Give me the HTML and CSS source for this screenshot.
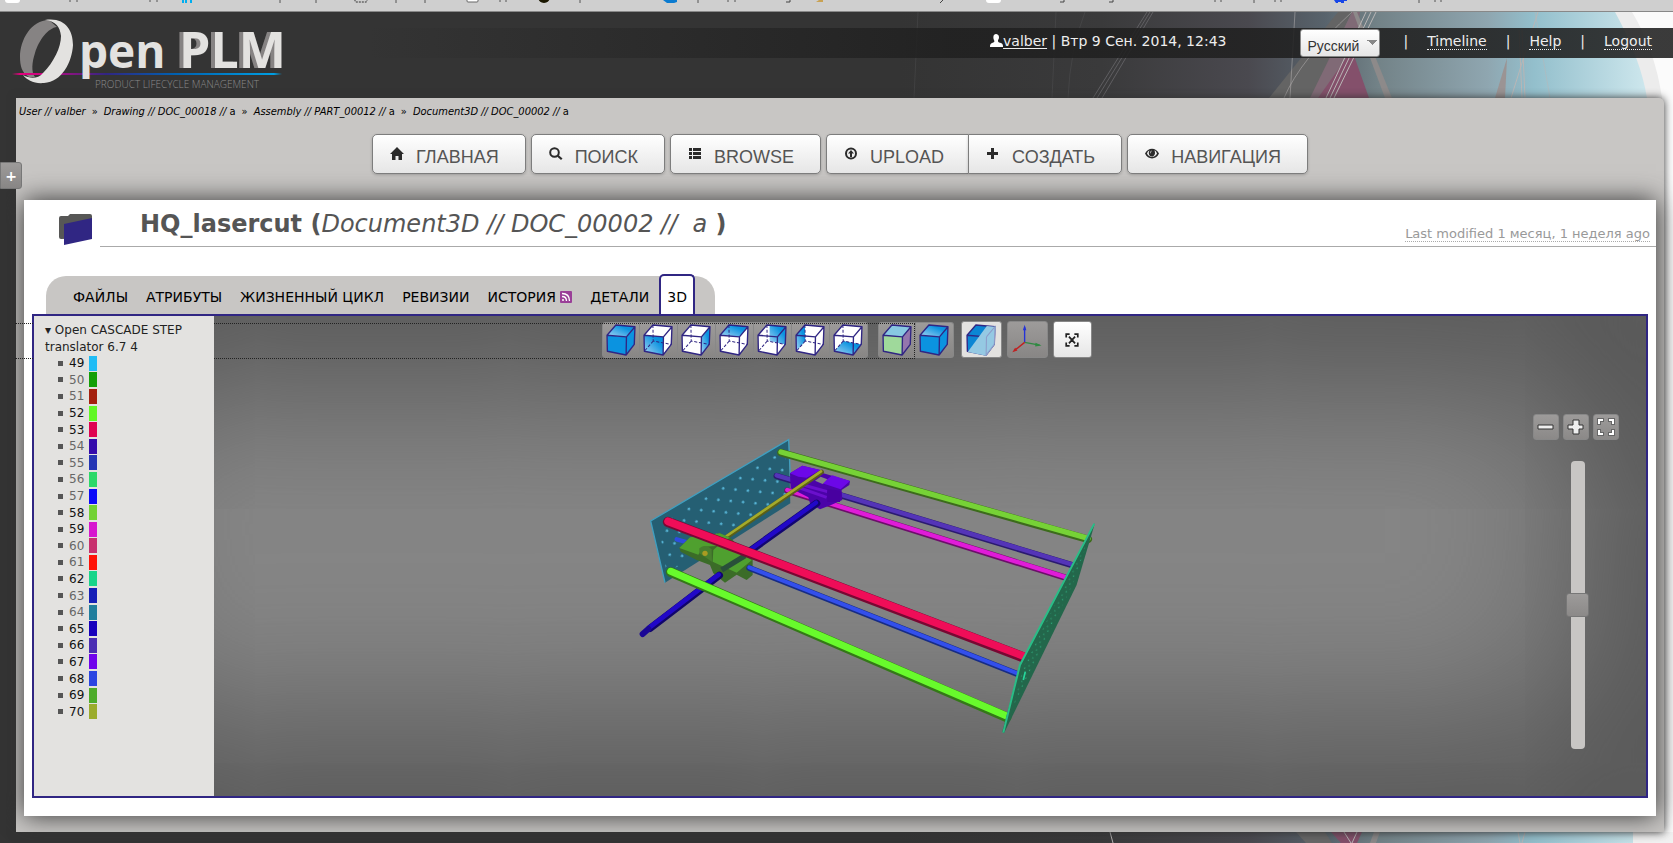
FILE: index.html
```html
<!DOCTYPE html>
<html lang="ru">
<head>
  <meta charset="UTF-8" />
  <meta name="viewport" content="width=device-width, initial-scale=1.0"/>
  <title>HQ_lasercut - OpenPLM</title>
  <link rel="stylesheet" href="styles.css">
</head>
<body>

  <!-- shared cube outlines -->
  <svg class="defs" width="0" height="0" aria-hidden="true">
    <defs>
      <linearGradient id="blueTop" x1="1" y1="0" x2="0" y2="1">
        <stop offset="0.3" stop-color="#0b93e0"/><stop offset="1" stop-color="#a9d6f3"/>
      </linearGradient>
      <g id="edges" fill="none" stroke="#302683" stroke-width="4" stroke-linejoin="round">
        <path d="M2 33 L59 38 L58 91 L3 80 Z M2 33 L28 3 L84 8 L59 38 M84 8 L82 60 L58 91"/>
      </g>
      <path id="hidden" d="M28 3 L29 50 L82 60 M29 50 L3 80" fill="none" stroke="#302683" stroke-width="3" stroke-dasharray="9 5"/>
      <path id="shell" d="M2 33 L28 3 L84 8 L82 60 L58 91 L3 80 Z" fill="#fff"/>
    </defs>
  </svg>

  <svg class="backdrop" viewBox="0 0 1673 843" preserveAspectRatio="xMaxYMin slice" aria-hidden="true">
    <defs>
      <linearGradient id="sky" gradientUnits="userSpaceOnUse" x1="900" y1="0" x2="1673" y2="0">
        <stop offset="0" stop-color="#343434"/><stop offset="0.26" stop-color="#3a3a3b"/>
        <stop offset="0.45" stop-color="#4a494f"/><stop offset="0.55" stop-color="#58636c"/>
        <stop offset="0.62" stop-color="#738388"/><stop offset="0.76" stop-color="#8fa6b0"/>
        <stop offset="0.82" stop-color="#93bfcc"/><stop offset="0.97" stop-color="#cfe8ee"/>
        <stop offset="1" stop-color="#ddeef2"/>
      </linearGradient>
    </defs>
    <rect width="1673" height="843" fill="#343434"/>
    <rect x="900" width="773" height="843" fill="url(#sky)"/>
    <path d="M1338 12 H1352 L1311 98 H1269 Z" fill="#646464"/>
    <path d="M1352 12 L1310 98 H1324 L1355 54 L1360 12 Z" fill="#806a76"/>
    <path d="M1352 50 L1318 98 H1369 Z" fill="#84506b"/>
    <path d="M1353 12 L1385 98 H1392 L1357 12 Z" fill="#8d8a8a"/>
    <path d="M1507 58 L1495 98 H1505 Z" fill="#9b9494"/>
    <path d="M1615 12 Q1641 60 1647 98 V843 H1673 V12 Z" fill="#ececec"/>
    <path d="M1632 12 Q1655 50 1662 98 V843 H1673 V12 Z" fill="#fbfbfb"/>
    <g fill="none" stroke="#b9b6b6" stroke-width="1">
      <path d="M1366 12 L1326 98 M1371 12 L1330 98 M1376 12 L1334 98"/>
      <path d="M1519 30 L1522 98 M1522 30 L1525 98 M1538 12 L1511 98"/>
      <path d="M1535 12 L1550 98 M1352 12 Q1300 60 1284 98 M1295 12 L1290 98" opacity=".5"/>
    </g>
    <g fill="none" stroke="#77767a" stroke-width="1" opacity=".6">
      <path d="M1147 12 L1093 98 M1150 12 L1097 98 M1153 12 L1102 98"/>
      <path d="M1085 12 Q1070 50 1068 98 M1056 12 L1052 98 M918 12 L914 98" opacity=".3"/>
    </g>
    <path d="M1296 832 H1325 L1332 843 H1306 Z" fill="#686868"/>
    <path d="M1331 832 H1362 L1357 843 H1341 Z" fill="#84506b"/>
    <path d="M1374 832 H1380 L1376 843 H1370 Z" fill="#8d8a8a"/>
    <path d="M1344 832 L1351 843 M1357 832 L1352 843 M1518 832 L1520 843 M1525 832 L1522 843 M1110 832 L1113 843" stroke="#b9b6b6" fill="none"/>
    <path d="M1633 832 H1673 V843 H1633 Z" fill="#f2f2f2"/>
  </svg>

  <!-- bottom edge of the bookmarks bar -->
  <div class="bookmarks">
    <svg width="1560" height="11" aria-hidden="true">
      <g fill="#fff"><rect x="5" y="-6" width="15" height="9" rx="3"/><rect x="986" y="-6" width="15" height="9" rx="3"/></g>
      <rect x="467" y="-6" width="11" height="8" rx="1" fill="#fff" stroke="#666"/>
      <rect x="355" y="-6" width="12" height="8" rx="1" fill="none" stroke="#333" stroke-dasharray="2 1"/>
      <path d="M182 0h2v3h-2z M185 0h2v3h-2z M190 0h2v3h-2z" fill="#00aeef"/>
      <circle cx="544" cy="-3" r="6" fill="#1a1700"/>
      <path d="M663 0h14v2l-3 1h-7z" fill="#0b7bd0"/>
      <path d="M816 2l3-2h4v2z" fill="#c9a253"/>
      <path d="M1334 0h13v1h-3v2h-3v-1h-3v1h-2z" fill="#1746e8"/>
      <path d="M70 0v2M77 0v2M150 0v2M157 0v2M280 0v3M316 0v3M396 0v3M425 0v3M500 0v2M506 0v2M580 0v3M698 0v3M728 0v2M735 0v2M1215 0v2M1221 0v2M1254 0v3M1275 0v2M1281 0v2M1419 0v3M1435 0v2M1441 0v2" stroke="#555" fill="none"/>
      <path d="M786 2h4v-2M940 3l3-3M1060 2h4v-2M1109 2h4v-2" stroke="#444" fill="none"/>
    </svg>
  </div>

  <header class="header">
    <a class="logo" href="#" aria-label="OpenPLM">
      <svg width="290" height="86" viewBox="0 12 290 86">
        <defs>
          <linearGradient id="line" x1="0" x2="1">
            <stop offset="0" stop-color="#e5007d" stop-opacity="0"/><stop offset="0.03" stop-color="#e5007d"/>
            <stop offset="0.12" stop-color="#c4077f"/>
            <stop offset="0.35" stop-color="#302683"/><stop offset="0.6" stop-color="#0060b0"/>
            <stop offset="0.97" stop-color="#009fe3"/><stop offset="1" stop-color="#009fe3" stop-opacity="0"/>
          </linearGradient>
        </defs>
        <path fill="#868383" d="M49 20 C31 20 20 40 20 57 C20 66 22 73 29 77 L35 77 C31 72 32 62 35 53 C39 40 48 28 57 27 Z"/>
        <rect x="12" y="73" width="270" height="2" fill="url(#line)"/>
        <path fill="#e3e2e0" d="M45 20 C65 17 73 30 73 45 C72 62 62 82 44 83 C34 84 27 80 23 75 C30 79 38 79 43 73 C54 62 61 47 61 36 C60 27 56 21 45 20 Z"/>
        <g class="logo-text">
          <text x="79" y="68" font-size="46">pen</text>
          <text class="logo-plm" x="179" y="68" font-size="50">PLM</text>
        </g>
        <text class="logo-sub" x="95" y="88">PRODUCT LIFECYCLE MANAGEMENT</text>
      </svg>
    </a>
    <div class="user-bar">
      <div class="user">
        <svg width="13" height="13" viewBox="0 0 13 13" fill="#fff"><path d="M6 0C3 0 3 4 4 6C5 8 4 8 2 9C0 10 0 11 0 13H13C13 11 13 10 11 9C8 8 8 8 8 6C10 4 9 0 6 0Z"/></svg><a href="#">valber</a> | Втр 9 Сен. 2014, 12:43
      </div>
      <select class="language" aria-label="Язык"><option>Русский</option><option>English</option></select>
      <nav class="user-links">
        <span>|</span><a href="#">Timeline</a><span>|</span><a href="#">Help</a><span>|</span><a href="#">Logout</a>
      </nav>
    </div>
  </header>

  <button class="side-tab" type="button" aria-label="Открыть панель">+</button>

  <main class="page">
    <nav class="breadcrumbs">
      <a href="#"><i>User // valber</i></a><span>»</span>
      <a href="#"><i>Drawing // DOC_00018 //</i> a</a><span>»</span>
      <a href="#"><i>Assembly // PART_00012 //</i> a</a><span>»</span>
      <a href="#"><i>Document3D // DOC_00002 //</i> a</a>
    </nav>

    <nav class="menu">
      <a class="menu-btn" href="#"><svg viewBox="0 0 14 14"><path d="M7 0L14 7H12V13H8.500V9H5.500V13H2V7H0Z"/></svg>ГЛАВНАЯ</a>
      <a class="menu-btn" href="#"><svg viewBox="0 0 14 14"><circle cx="5.500" cy="5.500" r="4.300" fill="none" stroke="#2b2b2b" stroke-width="2"/><path d="M8 9.500L9.500 8L13.500 11.500L12 13Z"/></svg>ПОИСК</a>
      <a class="menu-btn" href="#"><svg viewBox="0 0 14 14"><path d="M1 1h3v3H1zM5 1h8v3H5zM1 5h3v3H1zM5 5h8v3H5zM1 9h3v3H1zM5 9h8v3H5z"/></svg>BROWSE</a>
      <div class="menu-group">
        <a class="menu-btn" href="#"><svg viewBox="0 0 14 14"><circle cx="7" cy="6.500" r="5" fill="none" stroke="#2b2b2b" stroke-width="2"/><path d="M7 3L10 6.500H8V10H6V6.500H4Z"/></svg>UPLOAD</a>
        <a class="menu-btn" href="#"><svg viewBox="0 0 14 14"><path d="M5 1h3v4h4v3H8v4H5V8H1V5h4z"/></svg>СОЗДАТЬ</a>
      </div>
      <a class="menu-btn" href="#"><svg viewBox="0 0 14 14"><path fill-rule="evenodd" d="M0 6.500C3 0 11 0 14 6.500C11 13 3 13 0 6.500ZM2 6.500C4 11 10 11 12 6.500C11 4 10 3.500 9.500 3.500C11 7 9 9.500 7 9.500C4 9.500 3 6 4.500 3.500C3 4 2.500 5 2 6.500ZM7 3.500C5 4 5 6 6 6.500C6 5 6 4.500 7 3.500Z"/></svg>НАВИГАЦИЯ</a>
    </nav>

    <section class="content">
      <div class="object-head">
        <div class="object-icon">
          <svg width="34" height="32" viewBox="0 0 34 32"><path d="M0 4Q0 2 2 2H9L11 0H31Q33 0 33 2V24L2 25Q0 25 0 23Z" fill="#575756"/><path d="M5 10L33 4V25L5 31Z" fill="#302683"/></svg>
        </div>
        <div class="object-title">
          <h1>HQ_lasercut (<i>Document3D // DOC_00002 //&nbsp; a</i> )</h1>
          <p class="modified"><span>Last modified 1 месяц, 1 неделя ago</span></p>
        </div>
      </div>

      <nav class="tabs">
        <a href="#">ФАЙЛЫ</a>
        <a href="#">АТРИБУТЫ</a>
        <a href="#">ЖИЗНЕННЫЙ ЦИКЛ</a>
        <a href="#">РЕВИЗИИ</a>
        <a href="#">ИСТОРИЯ
          <svg width="12" height="12" viewBox="0 0 12 12"><rect width="12" height="12" rx="1" fill="#9a3f98"/><circle cx="3" cy="9" r="1" fill="#fff"/><path d="M2 5.500Q6.500 5.500 6.500 10M2 2.500Q9.500 2.500 9.500 10" fill="none" stroke="#fff" stroke-width="1.300"/></svg>
        </a>
        <a href="#">ДЕТАЛИ</a>
        <a class="active" href="#">3D</a>
      </nav>

      <div class="viewer">
        <svg class="scene" viewBox="0 0 1612 480" role="img" aria-label="HQ_lasercut">
          <defs>
            <pattern id="holes" width="60" height="44" patternUnits="userSpaceOnUse" patternTransform="rotate(-31)">
              <circle cx="14" cy="12" r="4" fill="#57b6d8"/><circle cx="44" cy="34" r="4" fill="#57b6d8"/>
            </pattern>
            <pattern id="greenHoles" width="16" height="26" patternUnits="userSpaceOnUse" patternTransform="rotate(25)">
              <circle cx="5" cy="6" r="2" fill="#2fae7f"/><circle cx="12" cy="18" r="2" fill="#2fae7f"/>
            </pattern>
          </defs>
          <g transform="translate(596 104) scale(.3333)">
            <path d="M62 303L476 59L481 250L105 488Z" fill="#255f73"/>
            <path d="M85 310L465 85L470 235L110 460Z" fill="url(#holes)"/>
            <path d="M481 170L476 59L62 303L105 488" fill="none" stroke="#3f9fc0" stroke-width="4"/>
            <g fill="none" stroke-linecap="round">
              <!-- back rods -->
              <path d="M440 168L1335 438" stroke="#2b1a70" stroke-width="19"/><path d="M440 166L1335 436" stroke="#5434b8" stroke-width="13"/>
              <path d="M472 212L1312 475" stroke="#6d0f6a" stroke-width="19"/><path d="M472 210L1312 473" stroke="#e01cd8" stroke-width="13"/>
              <path d="M453 98L1375 358" stroke="#3c6b1c" stroke-width="23"/><path d="M453 96L1375 355" stroke="#76d236" stroke-width="16"/>
            </g>
            <!-- purple carriage -->
            <path d="M480 160L517 137L570 150L580 160L660 183L658 195L635 210L637 240L605 254L570 268L540 250L535 232L482 205Z" fill="#4b03a8"/>
            <path d="M480 160L517 137L572 150L530 173L505 170ZM577 190L607 166L660 183L632 208Z" fill="#6c07e8"/>
            <path d="M555 182L572 170L592 178L578 192Z" fill="#858585"/>
            <path d="M520 195L592 215M510 204L590 232" stroke="#6a10cc" stroke-width="9"/>
            <path d="M592 207L632 212L630 246L592 246Z" fill="#4800a0"/>
            <g fill="none" stroke-linecap="round">
              <path d="M575 156L270 365" stroke="#5b5e18" stroke-width="14"/><path d="M573 154L268 363" stroke="#a3aa2b" stroke-width="8"/>
              <path d="M560 250L340 407" stroke="#120670" stroke-width="22"/><path d="M558 248L340 404" stroke="#2108c8" stroke-width="13"/>
              <path d="M140 358L190 372" stroke="#2e4be0" stroke-width="13"/>
            </g>
            <!-- green carriage -->
            <path d="M148 384L180 352L270 340L300 353L368 415V465L350 480L320 464L285 488L250 460L240 435L200 420L152 395Z" fill="#3b6c28"/>
            <path d="M148 384L180 352L270 340L300 353L258 378L220 380L205 404ZM250 390L270 372L366 420L320 458L248 425Z" fill="#4fa02f"/>
            <path d="M208 400V385Q228 370 245 388L246 425Z" fill="#477f2e"/><circle cx="225" cy="400" r="8" fill="#a99b21"/>
            <path d="M275 450L345 407" stroke="#29503a" stroke-width="16"/>
            <g fill="none" stroke-linecap="round">
              <path d="M268 466L60 625" stroke="#10056b" stroke-width="22"/><path d="M266 464L58 623" stroke="#2108c8" stroke-width="14"/>
              <path d="M55 627L38 642" stroke="#1b0796" stroke-width="18"/>
              <path d="M358 444L1170 765" stroke="#172c85" stroke-width="18"/><path d="M358 442L1170 763" stroke="#334fec" stroke-width="12"/>
              <path d="M122 456L1130 892" stroke="#347818" stroke-width="29"/><path d="M122 454L1130 888" stroke="#68fa2c" stroke-width="21"/>
              <path d="M114 306L1185 714" stroke="#780833" stroke-width="31"/><path d="M114 304L1185 710" stroke="#ef0d58" stroke-width="23"/>
            </g>
            <path d="M1395 309L1340 495L1122 940L1117 935L1170 735Z" fill="#23674b"/>
            <path d="M1375 360L1330 490L1150 860L1180 740Z" fill="url(#greenHoles)"/>
            <path d="M1393 311L1170 735L1120 938" fill="none" stroke="#2abd87" stroke-width="6"/>
            <path d="M1186 755L1180 780" stroke="#27d79c" stroke-width="5"/>
          </g>
        </svg>

        <aside class="tree">
          <div class="tree-root">▾ Open CASCADE STEP translator 6.7 4</div>
          <ul>
            <li>49<i style="background:#20bcf5"></i></li>
            <li class="off">50<i style="background:#149f07"></i></li>
            <li class="off">51<i style="background:#a4200e"></i></li>
            <li>52<i style="background:#61f724"></i></li>
            <li>53<i style="background:#df0452"></i></li>
            <li class="off">54<i style="background:#350bac"></i></li>
            <li class="off">55<i style="background:#2535b4"></i></li>
            <li class="off">56<i style="background:#2cd969"></i></li>
            <li class="off">57<i style="background:#0c09f8"></i></li>
            <li>58<i style="background:#72d234"></i></li>
            <li>59<i style="background:#d716cf"></i></li>
            <li class="off">60<i style="background:#c8306e"></i></li>
            <li class="off">61<i style="background:#ff1206"></i></li>
            <li>62<i style="background:#18d58a"></i></li>
            <li class="off">63<i style="background:#151fb7"></i></li>
            <li class="off">64<i style="background:#207e9d"></i></li>
            <li>65<i style="background:#1800bd"></i></li>
            <li>66<i style="background:#4a2db3"></i></li>
            <li>67<i style="background:#7003ec"></i></li>
            <li>68<i style="background:#2b46e2"></i></li>
            <li>69<i style="background:#4dac2a"></i></li>
            <li>70<i style="background:#9bac2c"></i></li>
          </ul>
        </aside>

        <div class="toolbar">
          <div class="group">
            <button type="button" aria-label="Isometric"><svg viewBox="0 0 86 94"><use href="#shell"/><path d="M2 33L59 38L84 8L82 60L58 91L3 80Z" fill="#0b93e0"/><path d="M2 33L28 3L84 8L59 38Z" fill="url(#blueTop)"/><use href="#edges"/></svg></button>
            <button type="button" aria-label="Front"><svg viewBox="0 0 86 94"><use href="#shell"/><path d="M2 33L59 38L58 91L3 80Z" fill="url(#blueTop)"/><use href="#hidden"/><use href="#edges"/></svg></button>
            <button type="button" aria-label="Right"><svg viewBox="0 0 86 94"><use href="#shell"/><path d="M59 38L84 8L82 60L58 91Z" fill="url(#blueTop)"/><use href="#hidden"/><use href="#edges"/></svg></button>
            <button type="button" aria-label="Top"><svg viewBox="0 0 86 94"><use href="#shell"/><path d="M2 33L28 3L84 8L59 38Z" fill="url(#blueTop)"/><use href="#hidden"/><use href="#edges"/></svg></button>
            <button type="button" aria-label="Rear"><svg viewBox="0 0 86 94"><use href="#shell"/><path d="M36 4L84 8L82 60L36 50Z" fill="url(#blueTop)"/><use href="#hidden"/><use href="#edges"/></svg></button>
            <button type="button" aria-label="Left"><svg viewBox="0 0 86 94"><use href="#shell"/><path d="M2 33L28 3L29 50L3 80Z" fill="url(#blueTop)"/><use href="#hidden"/><use href="#edges"/></svg></button>
            <button type="button" aria-label="Bottom"><svg viewBox="0 0 86 94"><use href="#shell"/><path d="M29 50L82 60L58 91L3 80Z" fill="url(#blueTop)"/><use href="#hidden"/><use href="#edges"/></svg></button>
          </div>
          <div class="group">
            <button class="focused" type="button" aria-label="Colors"><svg viewBox="0 0 86 94"><path d="M2 33L28 3L84 8L59 38Z" fill="#88c8e2"/><path d="M2 33L59 38L58 91L3 80Z" fill="#9fd99b"/><path d="M59 38L84 8L82 60L58 91Z" fill="#9476ad"/><use href="#edges"/></svg></button>
            <button type="button" aria-label="Single color"><svg viewBox="0 0 86 94"><path d="M2 33L59 38L84 8L82 60L58 91L3 80Z" fill="#0b93e0"/><path d="M2 33L28 3L84 8L59 38Z" fill="url(#blueTop)"/><use href="#edges"/></svg></button>
          </div>
          <button class="tool pressed" type="button" aria-label="Transparency"><svg viewBox="0 0 86 94"><path d="M2 33L28 3L84 8L82 60L58 91L3 80Z" fill="#0b86d4"/><use href="#edges"/><path d="M60 6L86 8L82 62L58 93L4 82Z" fill="#95c9e3"/><path d="M59 38L58 91M59 38L84 8L82 60L58 91" fill="none" stroke="#8d9cc9" stroke-width="3"/></svg></button>
          <button class="tool" type="button" aria-label="Axes"><svg viewBox="0 0 86 94"><g fill="none" stroke-width="4"><path d="M36 54V10" stroke="#2432d8"/><path d="M36 54L80 62" stroke="#2f8a42"/><path d="M36 54L6 78" stroke="#c02020"/></g><path d="M31 18L36 2L41 18Z" fill="#2432d8"/><path d="M68 55L86 63L67 66Z" fill="#2f8a42"/><path d="M0 83L8 70L15 78Z" fill="#c02020"/></svg></button>
          <button class="tool light" type="button" aria-label="Fit all"><svg viewBox="0 0 86 94"><path d="M26 40V30H36M50 30H60V40M60 54V64H50M36 64H26V54M34 37L52 57M52 37L34 57" fill="none" stroke="#222" stroke-width="5"/></svg></button>
        </div>

        <div class="zoom">
          <div class="zoom-buttons">
            <button type="button" aria-label="Zoom out"><svg width="18" height="18" viewBox="0 0 18 18"><path d="M1 7h15v4H1z" fill="#eee" stroke="#333"/></svg></button>
            <button type="button" aria-label="Zoom in"><svg width="18" height="18" viewBox="0 0 18 18"><path d="M6 2h6v5h4v4h-4v5H6v-5H1V7h5z" fill="#eee" stroke="#333"/></svg></button>
            <button type="button" aria-label="Full screen"><svg width="18" height="18" viewBox="0 0 18 18"><path d="M2 7V2H7M11 2H16V7M16 11V16H11M7 16H2V11" fill="none" stroke="#666" stroke-width="4"/><path d="M2 6V2H6M12 2H16V6M16 12V16H12M6 16H2V12" fill="none" stroke="#fff" stroke-width="2"/></svg></button>
          </div>
          <input class="zoom-range" type="range" min="0" max="100" value="50" aria-label="Zoom">
        </div>
      </div>
    </section>
  </main>

</body>
</html>
```
FILE: styles.css
```css
* { box-sizing: border-box; }
body {
  margin: 0;
  min-height: 100vh;
  position: relative;
  overflow-x: hidden;
  background: #343434;
  color: #222;
  font-family: 'DejaVu Sans', sans-serif;
  font-size: 14px;
}
a { color: inherit; text-decoration: none; }
button { font: inherit; padding: 0; cursor: pointer; }
.defs { position: absolute; }
.backdrop {
  position: absolute;
  inset: 0;
  width: 100%;
  height: 100%;
  z-index: -1;
}
.bookmarks {
  height: 12px;
  overflow: hidden;
  background: #cfcfcf;
  border-bottom: 1px solid #888;
}
.bookmarks svg { display: block; }

/* Header */
.header {
  display: flex;
  height: 86px;
}
.logo { flex: none; width: 290px; }
.logo-text {
  font-family: 'Open Sans', sans-serif;
  font-weight: 700;
  fill: #e3e2e0;
}
.logo-plm { filter: drop-shadow(-4px 0 0 #868383); }
.logo-sub {
  font-family: 'Open Sans', sans-serif;
  font-weight: 300;
  font-size: 10px;
  fill: #8a8a8a;
}
.user-bar {
  flex: 1;
  display: flex;
  align-items: center;
  justify-content: flex-end;
  height: 30px;
  margin: 16px 0 0 76px;
  padding-right: 21px;
  background: linear-gradient(to right, rgba(32,32,32,0), rgba(32,32,32,0.88) 45%);
  color: #eee;
}
.user { padding-bottom: 4px; }
.user svg { vertical-align: -1px; }
.user a {
  text-decoration: underline;
  text-underline-offset: 2px;
}
.language {
  width: 80px;
  height: 28px;
  margin: 0 23px 0 74px;
  padding: 5px 6px 0;
  appearance: none;
  border: 1px solid #888;
  border-radius: 3px;
  background: conic-gradient(from -45deg at 50% 100%, #888 90deg, transparent 0) 66px 10px / 10px 5px no-repeat,
    linear-gradient(#fff, #e6e6e6);
  color: #333;
  font-family: 'Liberation Sans', sans-serif;
  font-size: 14px;
}
.user-links {
  display: flex;
  gap: 19px;
  padding-bottom: 3px;
}
.user-links a { border-bottom: 1px dotted #eee; }

.side-tab {
  position: absolute;
  left: 0;
  top: 162px;
  width: 22px;
  height: 27px;
  z-index: 2;
  border: 1px solid #777;
  border-radius: 0 3px 3px 0;
  background: linear-gradient(#9d9b9a, #888685);
  color: #fff;
  font-weight: bold;
}

/* Page */
.page {
  margin: 0 9px 11px 16px;
  padding: 5px 8px 16px;
  background: #c8c6c4;
  border-radius: 0 5px 0 0;
  box-shadow: 0 0 9px #333;
}
.breadcrumbs {
  display: flex;
  gap: 6px;
  margin-left: -5px;
  height: 16px;
  align-items: center;
  color: #000;
  font-family: 'DejaVu Sans Condensed', 'DejaVu Sans', sans-serif;
  font-size: 11px;
}
.menu {
  display: flex;
  justify-content: center;
  gap: 5px;
  margin: 15px 0 26px;
}
.menu-group { display: flex; }
.menu-btn {
  display: flex;
  gap: 12px;
  height: 40px;
  padding: 12px 26px 0 17px;
  border: 1px solid #7d7d7d;
  border-radius: 5px;
  background: linear-gradient(#fff, #e6e6e6);
  box-shadow: 0 1px 3px rgba(0,0,0,0.2);
  color: #555;
  font-family: 'Liberation Sans', sans-serif;
  font-size: 18px;
  line-height: 20px;
}
.menu-btn svg {
  width: 14px;
  height: 14px;
  fill: #2b2b2b;
}
.menu-group .menu-btn:first-child {
  padding-right: 24px;
  border-right: 0;
  border-radius: 5px 0 0 5px;
}
.menu-group .menu-btn:last-child { border-radius: 0 5px 5px 0; }

/* Content */
.content {
  padding: 0 8px 18px;
  background: #fff;
  box-shadow: 0 0 24px #333;
}
.object-head {
  display: flex;
  margin-right: -8px;
}
.object-icon {
  width: 68px;
  padding: 14px 0 0 27px;
}
.object-title {
  flex: 1;
  display: flex;
  justify-content: space-between;
  height: 47px;
  padding-left: 40px;
  border-bottom: 1px solid #aaa;
}
.object-title h1 {
  margin: 0;
  color: #555;
  font-size: 24px;
  line-height: 48px;
}
.object-title i { font-weight: normal; }
.modified {
  align-self: flex-end;
  margin: 0 6px 3px 0;
  color: #999;
  font-size: 13px;
  line-height: 18px;
}
.modified span { border-bottom: 1px dotted #aaa; }

.tabs {
  display: flex;
  align-items: flex-end;
  gap: 18px;
  width: fit-content;
  height: 38px;
  margin: 27px 0 0 14px;
  padding: 0 20px 0 27px;
  background: #c8c6c4;
  border-radius: 20px 20px 0 0;
  color: #000;
}
.tabs a { line-height: 34px; white-space: nowrap; }
.tabs svg { vertical-align: -1px; }
.tabs .active {
  height: 40px;
  margin-left: -8px;
  padding: 0 6px;
  background: #fff;
  border: 2px solid #302683;
  border-bottom: 0;
  border-radius: 5px 5px 0 0;
  line-height: 42px;
}

.viewer {
  position: relative;
  border: 2px solid #302683;
  background: #868686;
  box-shadow: inset 0 0 160px 70px #555;
}
.scene { display: block; width: 100%; }
.tree {
  position: absolute;
  left: 0;
  top: 0;
  bottom: 0;
  z-index: 2;
  width: 180px;
  padding: 6px 11px;
  background: #e3e2e0;
  font-size: 12px;
}
.tree-root { line-height: 17px; }
.tree ul {
  display: grid;
  grid-auto-rows: 1fr;
  height: 365px;
  margin: -1px 0 0;
  padding: 0 0 0 13px;
  list-style: none;
}
.tree li {
  display: flex;
  align-items: center;
  gap: 5px;
  color: #111;
}
.tree li::before {
  content: "";
  width: 5px;
  height: 5px;
  margin-right: 1px;
  background: #555;
}
.tree li i { width: 8px; height: 15px; }
.tree .off { color: #666; }

.toolbar {
  position: absolute;
  top: 5px;
  left: 0;
  right: 0;
  display: flex;
  justify-content: center;
  align-items: center;
  padding-left: 13px;
}
.toolbar button {
  display: flex;
  align-items: center;
  justify-content: center;
  width: 38px;
  height: 36px;
  border: 1px solid #888;
  border-left: 0;
  background: linear-gradient(#9d9b9a, #888685);
}
.toolbar svg { width: 30px; height: 32px; }
.group { display: flex; margin-right: 10px; }
.group + .group { margin-right: 7px; }
.group button:first-child { border-left: 1px solid #888; border-radius: 3px 0 0 3px; }
.group button:last-child { border-radius: 0 3px 3px 0; }
/* keyboard focus ring runs off to the page edge */
.focused { position: relative; }
.focused::after {
  content: "";
  position: absolute;
  top: 0;
  right: 0;
  width: 899px;
  height: 34px;
  border: 1px dotted #222;
  border-left: 0;
  pointer-events: none;
}
.toolbar .tool {
  width: 41px;
  height: 37px;
  margin-right: 5px;
  border: 1px solid #888;
  border-radius: 3px;
}
.toolbar .tool:last-child { width: 39px; margin-right: 0; }
.toolbar .pressed { background: #e3e2e0; }
.toolbar .light { background: linear-gradient(#fff, #e6e6e6); }

.zoom {
  position: absolute;
  top: 98px;
  right: 27px;
  display: flex;
  flex-direction: column;
  align-items: center;
  gap: 21px;
}
.zoom-buttons { display: flex; gap: 4px; }
.zoom-buttons button {
  display: flex;
  align-items: center;
  justify-content: center;
  width: 26px;
  height: 26px;
  border: 1px solid #888;
  border-radius: 3px;
  background: linear-gradient(#9d9b9a, #8b8988);
}
.zoom-range {
  appearance: none;
  writing-mode: vertical-lr;
  width: 14px;
  height: 288px;
  margin: 0 0 0 3px;
  background: #c8c6c4;
  border-radius: 4px;
}
.zoom-range::-webkit-slider-thumb {
  appearance: none;
  width: 23px;
  height: 24px;
  border: 1px solid #777;
  border-radius: 3px;
  background: linear-gradient(#9d9b9a, #8b8988);
}
```
